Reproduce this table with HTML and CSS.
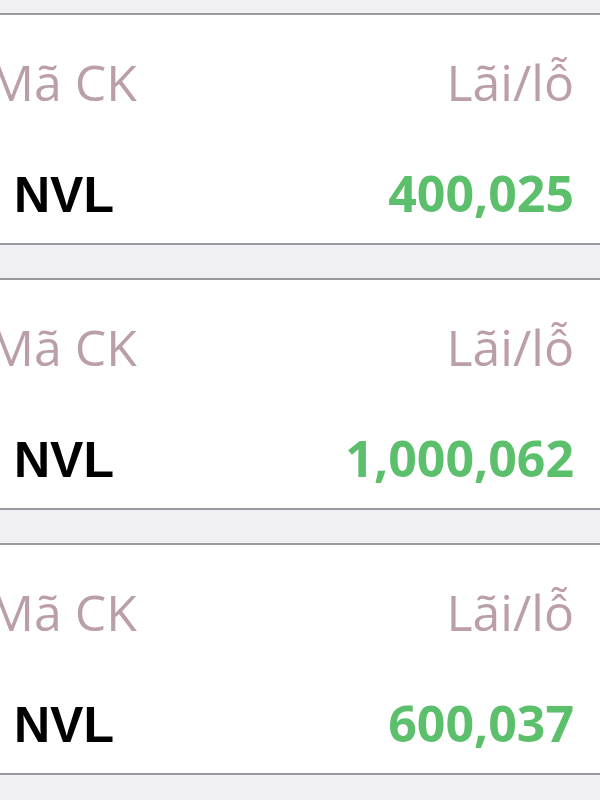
FILE: index.html
```html
<!DOCTYPE html>
<html lang="vi">
<head>
<meta charset="utf-8">
<link rel="stylesheet" href="styles.css">
</head>
<body>
<div class="list">
  <div class="card">
    <div class="row head"><span class="label left">Mã CK</span><span class="label">Lãi/lỗ</span></div>
    <div class="row vals"><span class="code">NVL</span><span class="pl">400,025</span></div>
  </div>
  <div class="card">
    <div class="row head"><span class="label left">Mã CK</span><span class="label">Lãi/lỗ</span></div>
    <div class="row vals"><span class="code">NVL</span><span class="pl">1,000,062</span></div>
  </div>
  <div class="card">
    <div class="row head"><span class="label left">Mã CK</span><span class="label">Lãi/lỗ</span></div>
    <div class="row vals"><span class="code">NVL</span><span class="pl">600,037</span></div>
  </div>
</div>
</body>
</html>
```

FILE: styles.css
```css
html, body {
  margin: 0;
  padding: 0;
  background: #efeff4;
  overflow: hidden;
}
.list {
  padding-top: 13px;
  display: flex;
  flex-direction: column;
  gap: 33px;
}
.card {
  background: #ffffff;
  border-top: 2px solid #9a9a9e;
  border-bottom: 2px solid #9a9a9e;
  height: 228px;
  box-sizing: content-box;
  padding: 0 26px 0 14px;
  overflow: hidden;
}
.row {
  display: flex;
  justify-content: space-between;
  align-items: baseline;
  height: 60px;
  line-height: 60px;
}
.head {
  margin-top: 37px;
}
.vals {
  margin-top: 51px;
}
.label {
  font-family: "Open Sans", sans-serif;
  font-size: 50px;
  color: #bb9fa8;
}
.left {
  margin-left: -25px;
}
.code {
  font-family: "Liberation Sans", Arial, sans-serif;
  font-weight: 700;
  font-size: 50px;
  color: #000000;
}
.pl {
  font-family: "Open Sans", sans-serif;
  font-weight: 700;
  font-size: 50px;
  color: #5cbf6c;
}
```
